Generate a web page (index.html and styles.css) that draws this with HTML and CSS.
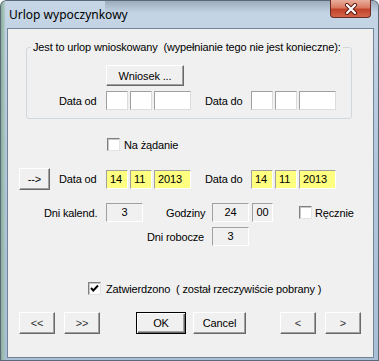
FILE: index.html
```html
<!DOCTYPE html>
<html lang="pl">
<head>
    <meta charset="UTF-8">
    <meta name="viewport" content="width=device-width, initial-scale=1.0">
    <title>Urlop wypoczynkowy</title>
    <link rel="stylesheet" href="styles.css">
</head>
<body>

    <div class="window">
        <div class="titlebar">
            <span class="title">Urlop wypoczynkowy</span>
            <span class="close">
                <svg width="14" height="12" viewBox="0 0 14 12">
                    <path d="M3 2 L11 10 M11 2 L3 10" stroke="#5a1a10" stroke-width="4" stroke-linecap="round"/>
                    <path d="M3 2 L11 10 M11 2 L3 10" stroke="#ffffff" stroke-width="2.2" stroke-linecap="round"/>
                </svg>
            </span>
        </div>

        <div class="client">
            <fieldset class="group">
                <legend>Jest to urlop wnioskowany&nbsp; (wypełnianie tego nie jest konieczne):</legend>
                <button class="btn btn-wniosek">Wniosek ...</button>
                <div class="row row-group-dates">
                    <span class="lbl lbl-od">Data od</span>
                    <div class="date">
                        <span class="field day"></span>
                        <span class="field day"></span>
                        <span class="field year"></span>
                    </div>
                    <span class="lbl lbl-do">Data do</span>
                    <div class="date">
                        <span class="field day"></span>
                        <span class="field day"></span>
                        <span class="field year"></span>
                    </div>
                </div>
            </fieldset>

            <div class="row row-check row-zadanie">
                <span class="check"></span>
                <span class="check-text">Na żądanie</span>
            </div>

            <div class="row row-dates">
                <button class="btn btn-arrow">--&gt;</button>
                <span class="lbl lbl-od">Data od</span>
                <div class="date">
                    <span class="field day yellow">14</span>
                    <span class="field day yellow">11</span>
                    <span class="field year yellow">2013</span>
                </div>
                <span class="lbl lbl-do">Data do</span>
                <div class="date">
                    <span class="field day yellow">14</span>
                    <span class="field day yellow">11</span>
                    <span class="field year yellow">2013</span>
                </div>
            </div>

            <div class="row row-totals">
                <span class="lbl lbl-kalend">Dni kalend.</span>
                <span class="field num readonly">3</span>
                <span class="lbl lbl-godz">Godziny</span>
                <span class="field num readonly">24</span>
                <span class="field min readonly">00</span>
                <span class="check check-recznie"></span>
                <span class="check-text">Ręcznie</span>
            </div>

            <div class="row row-robocze">
                <span class="lbl lbl-robocze">Dni robocze</span>
                <span class="field num readonly">3</span>
            </div>

            <div class="row row-check row-zatw">
                <span class="check">
                    <svg width="11" height="11" viewBox="0 0 11 11">
                        <polyline points="2,5 4.3,7.5 9,2.5" fill="none" stroke="#000" stroke-width="1.9"/>
                    </svg>
                </span>
                <span class="check-text">Zatwierdzono&nbsp; ( został rzeczywiście pobrany )</span>
            </div>

            <div class="row row-buttons">
                <button class="btn btn-nav btn-first">&lt;&lt;</button>
                <button class="btn btn-nav btn-next-far">&gt;&gt;</button>
                <button class="btn btn-default btn-ok">OK</button>
                <button class="btn btn-cancel">Cancel</button>
                <button class="btn btn-nav btn-prev">&lt;</button>
                <button class="btn btn-nav btn-next">&gt;</button>
            </div>
        </div>
    </div>

</body>
</html>
```

FILE: styles.css
```css
body {
    margin: 0;
    font-family: "Liberation Sans", Arial, sans-serif;
    font-size: 11px;
    letter-spacing: -0.15px;
    color: #000;
}
.window {
    width: 379px;
    height: 361px;
    box-sizing: border-box;
    display: flex;
    flex-direction: column;
    padding: 0 5px 3px 7px;
    border-radius: 6px 6px 0 0;
    background:
        linear-gradient(to bottom, rgba(70, 82, 96, 0.35), rgba(70, 82, 96, 0.08) 10px, rgba(70, 82, 96, 0) 13px) 105px 0 / 274px 14px no-repeat,
        linear-gradient(to right, #7fa58c 0, #9dbcb0 3px, rgba(0, 0, 0, 0) 6px),
        linear-gradient(to bottom, #c6d6e6, #b4c8dc 40%, #a9bfd5);
    box-shadow: inset 0 0 0 1px #5b6a7a;
}
.titlebar {
    display: flex;
    align-items: flex-start;
    height: 28px;
    flex-shrink: 0;
}
.title {
    font-family: "Noto Sans", "Open Sans", sans-serif;
    font-size: 12px;
    letter-spacing: 0;
    line-height: 16px;
    padding: 7px 0 0 2px;
    color: #000;
}
.close {
    margin-left: auto;
    margin-right: 3px;
    width: 41px;
    height: 18px;
    box-sizing: border-box;
    display: flex;
    align-items: center;
    justify-content: center;
    border: 1px solid #6a2b22;
    border-top: none;
    border-radius: 0 0 4px 4px;
    background: linear-gradient(to bottom, #e9ae9d 0, #d97a62 45%, #c2422a 55%, #d2664a 100%);
}
.client {
    flex: 1;
    background-color: #f0f0f0;
    border: 1px solid #71849a;
}
.group {
    margin: 12px 0 0 18px;
    width: 326px;
    box-sizing: border-box;
    padding: 11px 0 8px 0;
    border: 1px solid #d0d8de;
    border-radius: 3px;
    min-inline-size: 0;
}
.group legend {
    margin-left: 4px;
    padding: 0 2px;
    line-height: 13px;
    white-space: nowrap;
}
.row {
    display: flex;
    align-items: center;
}
.lbl {
    white-space: nowrap;
}
.check-text {
    white-space: nowrap;
}
.date {
    display: flex;
    gap: 2px;
}
.field {
    box-sizing: border-box;
    height: 19px;
    line-height: 17px;
    border: 1px solid;
    border-color: #a0a0a0 #dcdcdc #dcdcdc #a0a0a0;
    background-color: #fff;
    padding: 0 3px;
}
.field.day {
    width: 22px;
}
.field.year {
    width: 37px;
}
.field.yellow {
    background-color: #ffff80;
    border-color: #a0a0a0 #fff #fff #a0a0a0;
}
.field.readonly {
    background-color: #f0f0f0;
    border-color: #a0a0a0 #fff #fff #a0a0a0;
    text-align: center;
}
.field.num {
    width: 37px;
}
.field.min {
    width: 21px;
    margin-left: 3px;
    padding: 0 2px;
}
.btn {
    box-sizing: border-box;
    height: 22px;
    padding: 0;
    font-family: "Liberation Sans", Arial, sans-serif;
    font-size: 11px;
    letter-spacing: -0.15px;
    color: #000;
    background-color: #f0f0f0;
    border: 1px solid;
    border-color: #fff #696969 #696969 #fff;
    box-shadow: inset -1px -1px #a0a0a0;
}
.btn-default {
    border: 1px solid #000;
    box-shadow: inset 1px 1px #fff, inset -1px -1px #696969, inset -2px -2px #a0a0a0;
}
.btn-nav {
    width: 36px;
    color: #333;
}

/* group box */
.btn-wniosek {
    display: block;
    width: 78px;
    height: 21px;
    margin-left: 79px;
}
.row-group-dates {
    margin-top: 5px;
    height: 19px;
}
.row-group-dates .lbl-od {
    margin-left: 32px;
}
.lbl-od {
    width: 47px;
}
.lbl-do {
    width: 46px;
    margin-left: 14px;
}

/* checkboxes */
.check {
    box-sizing: border-box;
    width: 13px;
    height: 13px;
    flex-shrink: 0;
    border: 1px solid;
    border-color: #808080 #e3e3e3 #e3e3e3 #808080;
    box-shadow: inset 1px 1px #c8c8c8;
    background-color: #fff;
    display: flex;
    align-items: center;
    justify-content: center;
}
.row-check {
    height: 13px;
}
.row-zadanie {
    margin-top: 19px;
    padding-left: 99px;
}
.row-zadanie .check-text {
    margin-left: 4px;
}

/* main dates */
.row-dates {
    margin-top: 17px;
    height: 22px;
}
.btn-arrow {
    width: 31px;
    margin-left: 11px;
    margin-right: 9px;
}

/* totals */
.row-totals {
    margin-top: 13px;
    height: 19px;
}
.lbl-kalend {
    margin-left: 36px;
    width: 62px;
}
.lbl-godz {
    margin-left: 23px;
    width: 46px;
}
.check-recznie {
    margin-left: 26px;
    margin-right: 3px;
}
.row-robocze {
    margin-top: 5px;
    height: 19px;
}
.lbl-robocze {
    margin-left: 139px;
    width: 65px;
}
.row-zatw {
    margin-top: 36px;
    padding-left: 80px;
}
.row-zatw .check-text {
    margin-left: 5px;
}

/* bottom buttons */
.row-buttons {
    margin-top: 17px;
    height: 22px;
}
.btn-first {
    margin-left: 11px;
}
.btn-next-far {
    margin-left: 9px;
}
.btn-ok {
    width: 50px;
    margin-left: 36px;
}
.btn-cancel {
    width: 53px;
    margin-left: 7px;
}
.btn-prev {
    margin-left: 34px;
}
.btn-next {
    margin-left: 9px;
}
```
